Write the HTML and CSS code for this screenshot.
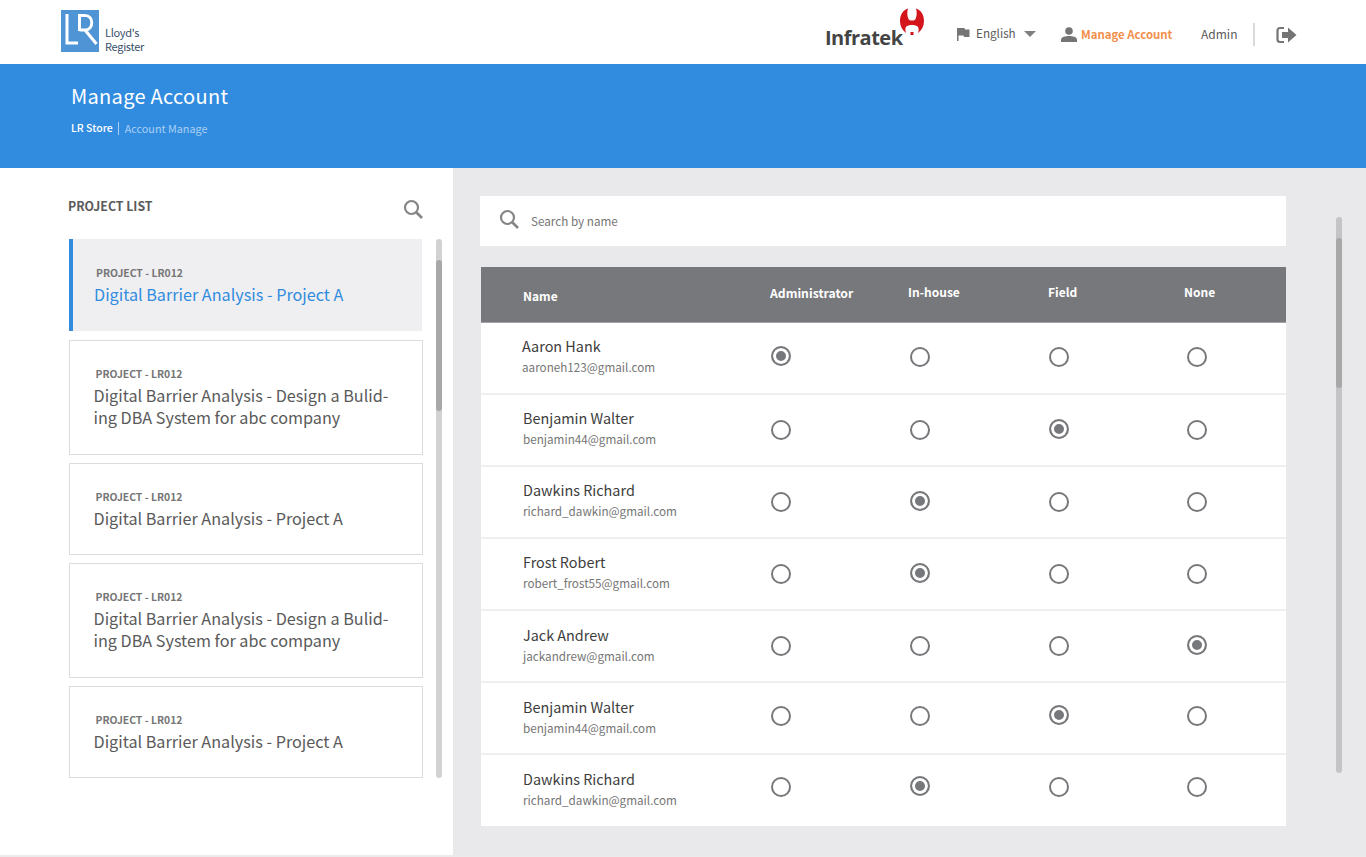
FILE: index.html
```html
<!DOCTYPE html>
<html lang="en">
  <head>
    <meta charset="UTF-8" />
    <meta name="viewport" content="width=device-width, initial-scale=1.0" />
    <title>Manage Account - LR Store</title>
    <link rel="stylesheet" href="styles.css">
  </head>
  <body>
    <header class="topbar">
      <div class="brand">
        <svg class="brand__mark" width="38" height="42" viewBox="0 0 38 42">
          <rect width="38" height="42" fill="#4f94d4" />
          <path d="M6 4V33H17" fill="none" stroke="#fff" stroke-width="3" />
          <path d="M18.500 5.500H24C33 5.500 33 20 24 20H18.500M18.500 4V21M24 20L35.500 34" fill="none" stroke="#fff" stroke-width="3" />
        </svg>
        <div class="brand__name">Lloyd's<br>Register</div>
      </div>
      <div class="topbar__right">
        <div class="infratek">
          <span class="infratek__name">Infratek</span>
          <svg class="infratek__mark" width="24" height="28" viewBox="0 0 24 28">
            <path d="M8 .5C3 2 0 7 0 13C0 18 2 22 6 25C5 22 5 19 7 18C9 16.500 15 16.500 17 18C19 19.500 19 22 18 25C22 22 24 18 24 13C24 7 21 2 16 .5C17 4 17 8 15.500 11C14.500 13 9.500 13 8.500 11C7 8 7 4 8 .5Z" fill="#d4151b" />
            <path d="M10.500 24H13.500V27H10.500Z" fill="#d4151b" />
          </svg>
        </div>
        <div class="nav-item nav-item--lang">
          <svg width="14" height="14" viewBox="0 0 14 14"><path d="M1 1H8.500L9 2.500H13.500V10H8L7.500 8.500H2.500V14H1Z" fill="#757575" /></svg>
          <span class="lang-label">English</span>
          <span class="caret"></span>
        </div>
        <div class="nav-item nav-item--account">
          <svg width="16" height="15" viewBox="0 0 16 15"><circle cx="8" cy="4" r="3.800" fill="#757575" /><path d="M0 15V12.500C0 10 4.500 9 8 9C11.500 9 16 10 16 12.500V15Z" fill="#757575" /></svg>
          <span>Manage Account</span>
        </div>
        <div class="nav-user">Admin</div>
        <div class="nav-logout">
          <svg width="21" height="18" viewBox="0 0 21 18">
            <path d="M8 2H4C2.500 2 1.500 3 1.500 4.500V13.500C1.500 15 2.500 16 4 16H8" fill="none" stroke="#757575" stroke-width="2.200" />
            <path d="M6 6H12V1.500L20.500 9L12 16.500V12H6Z" fill="#757575" />
          </svg>
        </div>
      </div>
    </header>

    <section class="banner">
      <h1>Manage Account</h1>
      <p class="crumbs"><b>LR Store</b><i></i><span>Account Manage</span></p>
    </section>

    <main class="content">
      <aside class="projects">
        <div class="projects__head">
          <h2>PROJECT LIST</h2>
          <svg class="search-icon" width="20" height="20" viewBox="0 0 20 20"><circle cx="8.500" cy="8.500" r="6.500" fill="none" stroke="#858585" stroke-width="2.200" /><path d="M13.500 13.500L19 19" stroke="#858585" stroke-width="2.600" /></svg>
        </div>
        <div class="projects__body">
          <div class="projects__list">
            <div class="project-card project-card--active">
              <small>PROJECT - LR012</small>
              <p>Digital Barrier Analysis - Project A</p>
            </div>
            <div class="project-card project-card--tall">
              <small>PROJECT - LR012</small>
              <p>Digital Barrier Analysis - Design a Bulid-<br>ing DBA System for abc company</p>
            </div>
            <div class="project-card">
              <small>PROJECT - LR012</small>
              <p>Digital Barrier Analysis - Project A</p>
            </div>
            <div class="project-card project-card--tall">
              <small>PROJECT - LR012</small>
              <p>Digital Barrier Analysis - Design a Bulid-<br>ing DBA System for abc company</p>
            </div>
            <div class="project-card">
              <small>PROJECT - LR012</small>
              <p>Digital Barrier Analysis - Project A</p>
            </div>
          </div>
          <div class="scrollbar scrollbar--left"><div class="scrollbar__thumb"></div></div>
        </div>
      </aside>

      <section class="accounts">
        <div class="accounts__main">
          <div class="search-box">
            <svg class="search-icon" width="20" height="20" viewBox="0 0 20 20"><circle cx="8.500" cy="8.500" r="6.500" fill="none" stroke="#858585" stroke-width="2.200" /><path d="M13.500 13.500L19 19" stroke="#858585" stroke-width="2.600" /></svg>
            <span class="search-box__text">Search by name</span>
          </div>
          <div class="table">
            <div class="table__head">
              <span class="th-name">Name</span>
              <span class="th-admin">Administrator</span>
              <span>In-house</span>
              <span>Field</span>
              <span>None</span>
            </div>
            <div id="rows"></div>
          </div>
        </div>
        <div class="scrollbar scrollbar--right"><div class="scrollbar__thumb"></div></div>
      </section>
    </main>
    <div class="footer-line"></div>

    <script>
      // role: 0 admin, 1 in-house, 2 field, 3 none
      const users = [
        ["Aaron Hank", "aaroneh123@gmail.com", 0],
        ["Benjamin Walter", "benjamin44@gmail.com", 2],
        ["Dawkins Richard", "richard_dawkin@gmail.com", 1],
        ["Frost Robert", "robert_frost55@gmail.com", 1],
        ["Jack Andrew", "jackandrew@gmail.com", 3],
        ["Benjamin Walter", "benjamin44@gmail.com", 2],
        ["Dawkins Richard", "richard_dawkin@gmail.com", 1],
      ];

      const rows = document.getElementById("rows");
      users.forEach((user) => {
        const row = document.createElement("div");
        row.className = "table__row";
        let radios = "";
        for (let i = 0; i < 4; i++) {
          radios += `<div class="cell"><span class="radio${i === user[2] ? " radio--on" : ""}"></span></div>`;
        }
        row.innerHTML = `
          <div class="person">
            <div class="person__name">${user[0]}</div>
            <div class="person__mail">${user[1]}</div>
          </div>
          ${radios}
        `;
        rows.appendChild(row);
      });
    </script>
  </body>
</html>
```

FILE: styles.css
```css
* {
  box-sizing: border-box;
}
html,
body {
  height: 857px;
  overflow: hidden;
}
body {
  margin: 0;
  font-family: "Noto Sans CJK SC", "Noto Sans", sans-serif;
  color: #5a5a5a;
  background: #fff;
}
h1,
h2,
p {
  margin: 0;
  font-weight: normal;
}

/* top bar */
.topbar {
  height: 64px;
  display: flex;
  justify-content: space-between;
  padding: 10px 69px 0 61px;
  background: #fff;
}
.brand {
  display: flex;
  align-items: flex-end;
  height: 43px;
}
.brand__mark {
  align-self: flex-start;
}
.brand__name {
  margin-left: 6px;
  font-size: 11px;
  line-height: 14px;
  letter-spacing: -0.3px;
  color: #37506b;
}
.topbar__right {
  display: flex;
  align-items: flex-start;
}
.infratek {
  display: flex;
  width: 99px;
  height: 40px;
  margin-right: 32px;
  margin-top: -3px;
  align-items: flex-start;
}
.infratek__name {
  margin-top: 17px;
  font-family: "Open Sans", sans-serif;
  font-weight: 700;
  font-size: 20px;
  line-height: 28px;
  letter-spacing: -0.5px;
  color: #444;
}
.infratek__mark {
  flex: none;
  margin: 1px 0 0 -3px;
}
.nav-item {
  display: flex;
  align-items: center;
  height: 20px;
  margin-top: 14px;
  font-size: 11.700px;
}
.nav-item--lang {
  width: 105px;
  color: #5a5a5a;
}
.nav-item--lang svg {
  margin-right: 6px;
}
.lang-label {
  margin-bottom: 3px;
}
.caret {
  margin-left: 8px;
  border-left: 6px solid transparent;
  border-right: 6px solid transparent;
  border-top: 6px solid #808080;
}
.nav-item--account {
  width: 140px;
  font-size: 11.400px;
  font-weight: 700;
  color: #f28f4b;
}
.nav-item--account svg {
  margin-right: 4px;
}
.nav-user {
  margin-top: 14px;
  width: 52px;
  font-size: 12px;
  line-height: 20px;
}
.nav-logout {
  height: 23px;
  margin-top: 13px;
  padding: 2px 0 0 21px;
  border-left: 2px solid #d9d9d9;
}

/* blue banner */
.banner {
  height: 104px;
  padding: 18px 71px 0;
  background: #318ce0;
  color: #fff;
}
.banner h1 {
  font-size: 20px;
  line-height: 28px;
  letter-spacing: 0.3px;
}
.crumbs {
  display: flex;
  align-items: center;
  margin-top: 10px;
  font-size: 10.500px;
  line-height: 16px;
}
.crumbs b {
  font-weight: 500;
}
.crumbs i {
  width: 1px;
  height: 13px;
  margin: 0 6px 0 5px;
  background: #a9cff2;
}
.crumbs span {
  font-size: 10.800px;
  color: #a9cff2;
}

/* page body */
.content {
  display: flex;
  height: 687px;
}
.projects {
  width: 453px;
  padding: 27px 11px 0 69px;
  background: #fff;
}
.projects__head {
  display: flex;
  justify-content: space-between;
  height: 44px;
  padding-right: 19px;
}
.projects__head h2 {
  margin-left: -1px;
  font-size: 12.300px;
  line-height: 22px;
  font-weight: 700;
}
.projects__head .search-icon {
  margin-top: 4px;
}
.projects__body {
  display: flex;
  justify-content: space-between;
}
.projects__list {
  display: flex;
  flex-direction: column;
  gap: 8px;
  width: 354px;
}
.project-card {
  height: 92px;
  padding: 23px 24px 0 23.500px;
  border: 1px solid #dcdcdc;
}
.project-card--tall {
  height: 115px;
}
.project-card small {
  display: block;
  padding-left: 2px;
  font-size: 10.400px;
  line-height: 20px;
  font-weight: 700;
  color: #757575;
}
.project-card p {
  font-size: 16.200px;
  line-height: 22px;
}
.project-card--active {
  margin-bottom: 1px;
  padding-top: 24px;
  padding-left: 21px;
  border: 0;
  border-right: 1px solid #fff;
  border-left: 4px solid #318ce0;
  background: #efeff1;
  color: #318ce0;
}
.scrollbar {
  width: 6px;
  border-radius: 3px;
  background: #d2d2d2;
}
.scrollbar__thumb {
  border-radius: 3px;
  background: #a8a8a8;
}
.scrollbar--left {
  height: 539px;
  padding-top: 21px;
}
.scrollbar--left .scrollbar__thumb {
  height: 151px;
}
.scrollbar--right {
  height: 556px;
  margin-top: 49px;
  padding-top: 21px;
  background: #c4c4c6;
}
.scrollbar--right .scrollbar__thumb {
  height: 150px;
}

.accounts {
  flex: 1;
  display: flex;
  justify-content: space-between;
  padding: 0 24px 0 27px;
  background: #e9e9eb;
}
.accounts__main {
  width: 806px;
  padding-top: 28px;
}
.search-box {
  display: flex;
  align-items: center;
  height: 50px;
  padding-left: 19px;
  margin-bottom: 21px;
  background: #fff;
  font-size: 11.700px;
  color: #757575;
}
.search-box .search-icon {
  margin: -4px 12px 0 0;
}
.search-box__text {
  margin-bottom: 2px;
}

/* table */
.table {
  margin-left: 1px;
}
.table__head {
  display: grid;
  grid-template-columns: 289px 138px 140px 136px 1fr;
  height: 56px;
  padding-top: 15px;
  border-bottom: 1px solid #a3a3a6;
  background: #77787b;
  color: #fff;
  font-size: 12px;
  font-weight: 700;
  line-height: 20px;
}
.th-name {
  padding: 4px 0 0 42px;
}
.th-admin {
  padding-top: 1px;
  font-size: 12.200px;
}
.table__row {
  display: grid;
  grid-template-columns: 230px 139px 139px 139px 137px;
  height: 72px;
  background: #fff;
  border-bottom: 2px solid #efefef;
}
.table__row:last-child {
  height: 71px;
  border-bottom: 0;
}
.table__row:first-child .person {
  padding-left: 41px;
}
.person {
  padding: 12px 0 0 42px;
}
.table__row:nth-child(n+5) .person {
  padding-top: 13px;
}
.person__name {
  font-size: 14.400px;
  line-height: 22px;
  color: #3d3d3d;
}
.person__mail {
  font-size: 11.700px;
  line-height: 20px;
  color: #757575;
}
.cell {
  display: flex;
  justify-content: center;
  padding-top: 24px;
}
.table__row:nth-child(n+2):nth-child(-n+5) .cell {
  padding-top: 25px;
}
.table__row:nth-child(6) .cell {
  padding-top: 23px;
}
.table__row:nth-child(7) .cell {
  padding-top: 22px;
}
.radio {
  width: 20px;
  height: 20px;
  border: 2px solid #77787b;
  border-radius: 50%;
  background: #fff;
}
.radio--on {
  margin-top: -1px;
  background: #77787b;
  box-shadow: inset 0 0 0 3px #fff;
}

.footer-line {
  height: 2px;
  background: #ebebeb;
}
```
